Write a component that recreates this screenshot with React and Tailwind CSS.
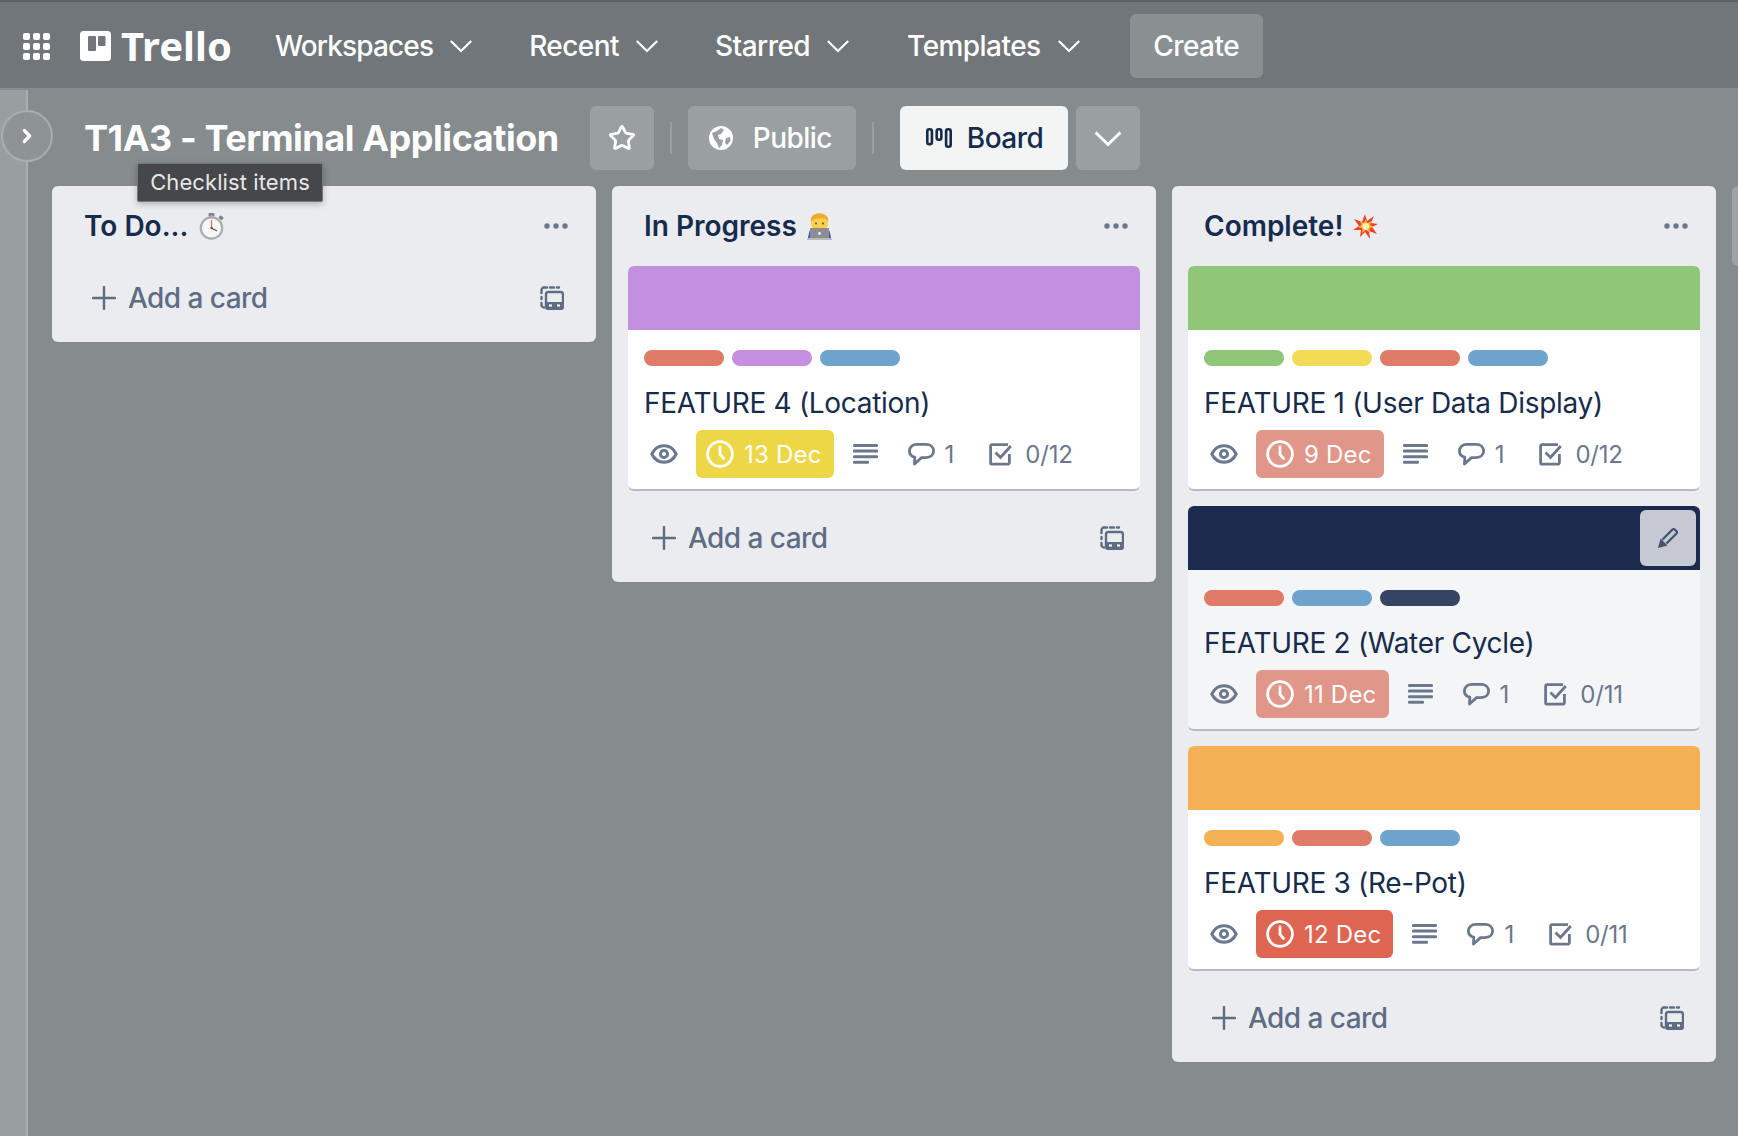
import { Star, ChevronRight } from 'lucide-react'

const FONT = "font-['Inter','Liberation_Sans',sans-serif]"

const CARDS = {
  progress: [
    {
      title: 'FEATURE 4 (Location)',
      cover: 'bg-[#c390e0]',
      labels: ['bg-[#e07b69]', 'bg-[#c48fe0]', 'bg-[#6fa3cd]'],
      due: '13 Dec',
      dueColor: 'bg-[#eed746]',
      checks: '0/12',
    },
  ],
  complete: [
    {
      title: 'FEATURE 1 (User Data Display)',
      cover: 'bg-[#8fc678]',
      labels: ['bg-[#8fc678]', 'bg-[#f2dc55]', 'bg-[#e07b69]', 'bg-[#6fa3cd]'],
      due: '9 Dec',
      dueColor: 'bg-[#e1968a]',
      checks: '0/12',
    },
    {
      title: 'FEATURE 2 (Water Cycle)',
      cover: 'bg-[#1c2b4d]',
      labels: ['bg-[#e07b69]', 'bg-[#6fa3cd]', 'bg-[#354462]'],
      due: '11 Dec',
      dueColor: 'bg-[#e1968a]',
      checks: '0/11',
      hovered: true,
    },
    {
      title: 'FEATURE 3 (Re-Pot)',
      cover: 'bg-[#f4b156]',
      labels: ['bg-[#f4b156]', 'bg-[#e07b69]', 'bg-[#6fa3cd]'],
      due: '12 Dec',
      dueColor: 'bg-[#dd6552]',
      checks: '0/11',
    },
  ],
}

function Chevron({ className, width = 2.2 }) {
  return (
    <svg viewBox="0 0 22 14" className={className} fill="none" stroke="currentColor" strokeWidth={width}>
      <path d="M0.8 2 L11 12 L21.2 2" />
    </svg>
  )
}

function GridIcon() {
  return (
    <svg viewBox="0 0 27 27" className="h-[27px] w-[27px]" fill="white">
      {[0, 10, 20].map(y =>
        [0, 10, 20].map(x => <rect key={`${x}-${y}`} x={x} y={y} width="7" height="7" rx="2" />)
      )}
    </svg>
  )
}

function TrelloMark() {
  return (
    <svg viewBox="0 0 31 30" className="h-[30px] w-[31px]">
      <rect width="31" height="30" rx="3.5" fill="white" />
      <rect x="8" y="5" width="8" height="15" rx="1" fill="#71767a" />
      <rect x="18" y="5" width="7.5" height="10" rx="1" fill="#71767a" />
    </svg>
  )
}

function NavItem({ label, className }) {
  return (
    <div className={`flex items-center text-[28px] font-[450] text-white ${className}`}>
      <span>{label}</span>
      <Chevron className="ml-[17px] h-[14px] w-[22px]" />
    </div>
  )
}

function GlobeIcon() {
  return (
    <svg viewBox="0 0 24 24" className="h-[24px] w-[24px]">
      <circle cx="12" cy="12" r="12" fill="white" />
      <path d="M3 7 L8 5 L12 2 L15 4 L12 8 L9 9 L10 13 L14 14 L13 19 L10 22 L8 17 L5 13 Z" fill="#9a9fa2" />
      <path d="M17 12 L21 11 L21.5 15 L18 19 L16 17 Z" fill="#9a9fa2" />
    </svg>
  )
}

function BoardIcon() {
  return (
    <svg viewBox="0 0 26 20" className="h-[20px] w-[26px]" fill="none" stroke="#172b4d" strokeWidth="2.6">
      <rect x="1.3" y="1.3" width="4.6" height="15" rx="2" />
      <rect x="10.7" y="1.3" width="4.6" height="10.5" rx="2" />
      <rect x="20.1" y="1.3" width="4.6" height="17.4" rx="2" />
    </svg>
  )
}

function Dots() {
  return (
    <svg viewBox="0 0 24 6" className="h-[6px] w-[24px]" fill="#6b778c">
      <circle cx="3" cy="3" r="2.7" />
      <circle cx="12" cy="3" r="2.7" />
      <circle cx="21" cy="3" r="2.7" />
    </svg>
  )
}

function PlusIcon() {
  return (
    <svg viewBox="0 0 24 24" className="h-[24px] w-[24px]" stroke="#5e6c84" strokeWidth="2.4" strokeLinecap="round">
      <path d="M12 1 V23 M1 12 H23" />
    </svg>
  )
}

function PencilIcon() {
  return (
    <svg viewBox="0 0 22 22" className="h-[22px] w-[22px]">
      <path d="M5.5 12.5 L15.5 2.5 a1.6 1.6 0 0 1 2.3 0 L19.5 4.2 a1.6 1.6 0 0 1 0 2.3 L9.5 16.5" fill="none" stroke="#42526e" strokeWidth="2.2" strokeLinejoin="round" />
      <path d="M1 21 L3.6 11.5 L10.5 18.4 Z" fill="#42526e" />
    </svg>
  )
}

function TemplateIcon() {
  return (
    <svg viewBox="0 0 24 24" className="h-[24px] w-[24px]" fill="none" stroke="#5e6c84" strokeWidth="2.4">
      <path d="M1.5 7 V4 a2.5 2.5 0 0 1 2.5 -2.5 H7 M10 1.5 H14 M17 1.5 H19" strokeLinecap="round" />
      <path d="M1.5 11 V13 M1.5 17 V19 a2.5 2.5 0 0 0 2.5 2.5" strokeLinecap="round" />
      <rect x="6" y="6" width="17" height="17" rx="2.5" />
      <path d="M6 16 H23 V20.5 a2.5 2.5 0 0 1 -2.5 2.5 H8.5 A2.5 2.5 0 0 1 6 20.5 Z" fill="#5e6c84" stroke="none" />
      <rect x="9" y="18.5" width="3" height="2" fill="white" stroke="none" />
      <rect x="17" y="18.5" width="3" height="2" fill="white" stroke="none" />
    </svg>
  )
}

function StopwatchEmoji() {
  return (
    <svg viewBox="0 0 27 27" className="h-[27px] w-[27px]">
      <rect x="10.5" y="0" width="6" height="3.4" rx="1" fill="#7f8388" />
      <rect x="12.5" y="2" width="2" height="3" fill="#a3a7ab" />
      <rect x="21" y="3" width="4.5" height="3.4" rx="1" fill="#7f8388" transform="rotate(40 23 4.5)" />
      <circle cx="13.5" cy="15" r="11.8" fill="#a9acb0" />
      <circle cx="13.5" cy="15" r="9.6" fill="#f6f6f4" />
      <path d="M13.5 15 V7" stroke="#d5745f" strokeWidth="1.2" />
      <path d="M13.5 15 L19 18" stroke="#555" strokeWidth="1.2" />
      <circle cx="13.5" cy="15" r="1.2" fill="#555" />
    </svg>
  )
}

function TechnologistEmoji() {
  return (
    <svg viewBox="0 0 25 27" className="h-[27px] w-[25px]">
      <path d="M0.5 27 L2.5 18 H22.5 L24.5 27 Z" fill="#3c4fb5" />
      <rect x="4" y="3" width="17" height="14" rx="6" fill="#f9cf4f" />
      <path d="M3.8 9 C3 3 8 0.3 12.5 0.3 C17 0.3 22 3 21.2 9 C20 5.5 17 4.5 14 5 C10 5.8 6.5 5 3.8 9 Z" fill="#eda92f" />
      <circle cx="9" cy="10.5" r="1" fill="#6b4a1e" />
      <circle cx="16" cy="10.5" r="1" fill="#6b4a1e" />
      <rect x="3" y="15" width="19" height="11" rx="1" fill="#8b8d92" />
      <rect x="1" y="25" width="23" height="2" fill="#b9bbc0" />
      <circle cx="12.5" cy="20.5" r="1.4" fill="#eceded" />
    </svg>
  )
}

function CollisionEmoji() {
  return (
    <svg viewBox="0 0 25 25" className="h-[25px] w-[25px]">
      <path d="M12 0 L14 7 L21 2 L18 9 L25 10 L19 13 L24 20 L16 17 L17 25 L12 18 L7 23 L8 16 L0 16 L6 12 L1 5 L9 8 Z" fill="#e8402a" />
      <path d="M12.5 5 L14.5 9 L19 7 L17 11 L21 13 L16.5 14.5 L17 19 L13 16 L9 19 L9.5 14.5 L5 13 L8.5 11 L7 7 L11 9 Z" fill="#fbb13c" />
      <circle cx="12.8" cy="12.3" r="3.4" fill="#fff2b0" />
    </svg>
  )
}

function EyeIcon() {
  return (
    <svg viewBox="0 0 28 20" className="h-[20px] w-[28px]" fill="none" stroke="#6b778c" strokeWidth="3">
      <path d="M1.8 10 C4.5 4.5 9 1.8 14 1.8 C19 1.8 23.5 4.5 26.2 10 C23.5 15.5 19 18.2 14 18.2 C9 18.2 4.5 15.5 1.8 10 Z" />
      <circle cx="14" cy="10" r="3.6" />
    </svg>
  )
}

function ClockIcon() {
  return (
    <svg viewBox="0 0 28 28" className="h-[28px] w-[28px]" fill="none" stroke="white" strokeWidth="2.8" strokeLinecap="round">
      <circle cx="14" cy="14" r="12.4" />
      <path d="M14 7 V14.5 L17.5 18.5" />
    </svg>
  )
}

function DescIcon() {
  return (
    <svg viewBox="0 0 25 20" className="h-[20px] w-[25px]" fill="#6b778c">
      <rect y="0" width="25" height="3" rx="1.2" />
      <rect y="5.6" width="25" height="3" rx="1.2" />
      <rect y="11.2" width="25" height="3" rx="1.2" />
      <rect y="16.8" width="16" height="3" rx="1.2" />
    </svg>
  )
}

function CommentIcon() {
  return (
    <svg viewBox="0 0 27 23" className="h-[23px] w-[27px]" fill="none" stroke="#6b778c" strokeWidth="2.8" strokeLinejoin="round">
      <path d="M9 1.4 H18 C22.5 1.4 25.6 4 25.6 8 C25.6 12 22.5 14.6 18 14.6 H13.5 L6.5 21 L6.8 14.2 C3.4 13.4 1.4 11 1.4 8 C1.4 4 4.5 1.4 9 1.4 Z" />
    </svg>
  )
}

function CheckIcon() {
  return (
    <svg viewBox="0 0 23 23" className="h-[23px] w-[23px]" fill="none" stroke="#6b778c" strokeWidth="2.8">
      <path d="M19 1.6 H3.4 a1.8 1.8 0 0 0 -1.8 1.8 V19.4 a1.8 1.8 0 0 0 1.8 1.8 H18.6 a1.8 1.8 0 0 0 1.8 -1.8 V11" />
      <path d="M6.5 9.5 L11.5 14.5 L21.8 3" />
    </svg>
  )
}

function Card({ card }) {
  return (
    <div
      className={`relative h-[225px] overflow-hidden rounded-[6px] border-b-2 border-[#b3b9c9] ${
        card.hovered ? 'bg-[#f4f5f7]' : 'bg-white'
      }`}
    >
      <div className={`h-[64px] ${card.cover}`} />
      {card.hovered && (
        <div className="absolute right-[4px] top-[4px] flex h-[56px] w-[56px] items-center justify-center rounded-[6px] bg-[#c6c9d3]">
          <PencilIcon />
        </div>
      )}
      <div className="px-[16px] pt-[20px]">
        <div className="flex gap-[8px]">
          {card.labels.map((color, i) => (
            <span key={i} className={`h-[16px] w-[80px] rounded-[8px] ${color}`} />
          ))}
        </div>
        <div className="mt-[21px] h-[32px] text-[28px] leading-[32px] tracking-[-0.3px] text-[#172b4d]">{card.title}</div>
        <div className="mt-[11px] flex h-[48px] items-center text-[24px] text-[#6b778c]">
          <div className="ml-[6px] flex w-[46px] items-center">
            <EyeIcon />
          </div>
          <div className={`flex h-[48px] items-center rounded-[6px] pl-[10px] pr-[12px] text-white ${card.dueColor}`}>
            <ClockIcon />
            <span className="ml-[10px] mt-[2px] tracking-[0.2px]">{card.due}</span>
          </div>
          <div className="ml-[19px]">
            <DescIcon />
          </div>
          <div className="ml-[30px]">
            <CommentIcon />
          </div>
          <span className="ml-[10px] mt-[2px]">1</span>
          <div className="ml-[35px]">
            <CheckIcon />
          </div>
          <span className="ml-[13px] mt-[2px] tracking-[-0.2px]">{card.checks}</span>
        </div>
      </div>
    </div>
  )
}

function List({ title, emoji, cards = [] }) {
  return (
    <div className="w-[544px] shrink-0 self-start rounded-[6px] bg-[#ebecf0] px-[16px] pb-[12px]">
      <div className="flex h-[80px] items-center justify-between pl-[16px] pr-[12px]">
        <div className="flex items-center gap-[10px] text-[28px] font-semibold text-[#172b4d]">
          <span>{title}</span>
          {emoji}
        </div>
        <Dots />
      </div>
      {cards.length > 0 && (
        <div className="mb-[15px] flex flex-col gap-[15px]">
          {cards.map(card => (
            <Card key={card.title} card={card} />
          ))}
        </div>
      )}
      <div className="flex h-[64px] items-center justify-between pl-[24px] pr-[16px] text-[28px] font-[450] tracking-[-0.55px] text-[#5e6c84]">
        <div className="flex items-center">
          <PlusIcon />
          <span className="ml-[12px]">Add a card</span>
        </div>
        <TemplateIcon />
      </div>
    </div>
  )
}

export default function App() {
  return (
    <div className={`relative flex h-screen w-full flex-col overflow-hidden bg-[#868b8e] ${FONT}`}>
      {/* top nav */}
      <header className="flex h-[88px] shrink-0 items-center border-t-2 border-[#5c6064] bg-[#71767a] pl-[23px] pt-[2px]">
        <GridIcon />
        <div className="ml-[30px] flex items-center">
          <TrelloMark />
          <span className="ml-[10px] font-['Noto_Sans',sans-serif] text-[40px] font-bold leading-none text-white">
            Trello
          </span>
        </div>
        <NavItem label="Workspaces" className="ml-[43px] tracking-[-0.85px]" />
        <NavItem label="Recent" className="ml-[57px] tracking-[-0.55px]" />
        <NavItem label="Starred" className="ml-[57px] tracking-[-0.55px]" />
        <NavItem label="Templates" className="ml-[58px] tracking-[-0.55px]" />
        <button className="ml-[50px] flex h-[64px] w-[133px] items-center justify-center rounded-[6px] bg-[#8a8f92] text-[28px] font-[450] tracking-[-0.55px] text-white">
          Create
        </button>
      </header>

      <div className="flex min-h-0 flex-1">
        {/* collapsed sidebar */}
        <aside className="mt-[2px] w-[28px] shrink-0 border-r-2 border-[#a9aeb1] bg-[#999ea1]" />

        <main className="min-w-0 flex-1 pl-[24px]">
          <div className="mt-[18px] flex h-[64px] items-center">
            <h1 className="ml-[32px] text-[36px] font-bold tracking-[-0.45px] text-white">T1A3 - Terminal Application</h1>
            <button className="ml-[31px] flex h-[64px] w-[64px] items-center justify-center rounded-[6px] bg-[#9a9fa2] text-white">
              <Star size={28} strokeWidth={2.4} />
            </button>
            <div className="mx-[16px] h-[32px] w-[2px] bg-[#9a9fa2]" />
            <button className="flex h-[64px] w-[168px] items-center rounded-[6px] bg-[#9a9fa2] pl-[21px] text-[28px] font-[450] tracking-[-0.55px] text-white">
              <GlobeIcon />
              <span className="ml-[20px]">Public</span>
            </button>
            <div className="mx-[16px] h-[32px] w-[2px] bg-[#9a9fa2]" />
            <button className="ml-[10px] flex h-[64px] w-[168px] items-center rounded-[6px] bg-[#f3f4f4] pl-[26px] text-[28px] font-[450] tracking-[-0.55px] text-[#172b4d]">
              <BoardIcon />
              <span className="ml-[15px]">Board</span>
            </button>
            <button className="ml-[8px] flex h-[64px] w-[64px] items-center justify-center rounded-[6px] bg-[#9a9fa2] text-white">
              <Chevron className="h-[17px] w-[28px]" width={2.4} />
            </button>
          </div>

          <div className="mt-[16px] flex gap-[16px]">
            <List title="To Do..." emoji={<StopwatchEmoji />} />
            <List title="In Progress" emoji={<TechnologistEmoji />} cards={CARDS.progress} />
            <List title="Complete!" emoji={<CollisionEmoji />} cards={CARDS.complete} />
            <div className="h-[80px] w-[544px] shrink-0 rounded-[6px] bg-[#9ea3a6]" />
          </div>
        </main>
      </div>

      {/* sidebar toggle sits on top of the edge */}
      <div className="absolute left-[1px] top-[110px] flex h-[52px] w-[52px] items-center justify-center rounded-full border-2 border-[#a9aeb1] bg-[#8e9396] text-white">
        <ChevronRight size={22} strokeWidth={3.5} />
      </div>

      {/* tooltip */}
      <div className="absolute left-[137px] top-[163px] flex h-[39px] w-[186px] items-center justify-center rounded-[2px] border border-[#77787b] bg-[#46474b] text-[22px] tracking-[0.1px] text-[#e6e6e6] shadow-[0_2px_6px_rgba(0,0,0,0.25)]">
        Checklist items
      </div>
    </div>
  )
}
